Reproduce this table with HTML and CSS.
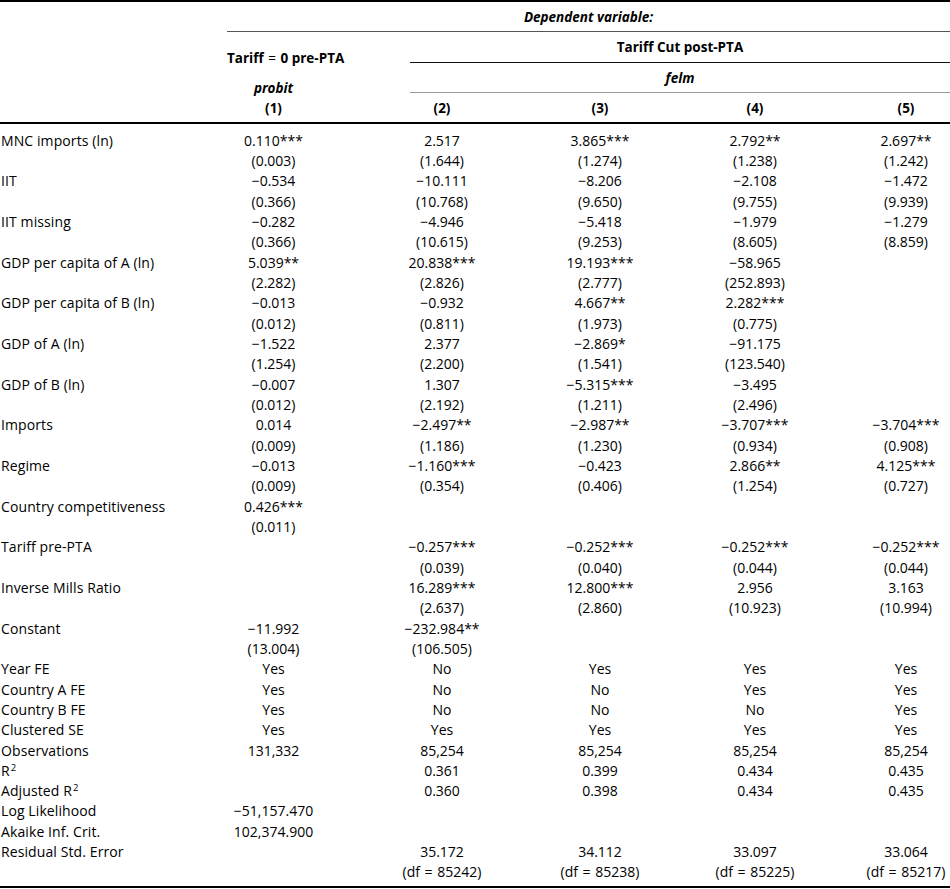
FILE: index.html
```html
<!DOCTYPE html>
<html lang="en">
<head>
<meta charset="utf-8">
<title>Regression table</title>
<link rel="stylesheet" href="styles.css">
</head>
<body>
<div class="table">
  <div class="rule rule-top"></div>

  <div class="head">
    <div class="h-dep">Dependent variable:</div>
    <div class="line line-dep"></div>
    <div class="h-t0">Tariff <span class="eq">=</span> 0 pre-PTA</div>
    <div class="h-cut">Tariff Cut post-PTA</div>
    <div class="line line-cut"></div>
    <div class="h-felm">felm</div>
    <div class="line line-felm"></div>
    <div class="h-probit"><span class="model">probit</span><span>(1)</span></div>
    <div class="h-num c2">(2)</div>
    <div class="h-num c3">(3)</div>
    <div class="h-num c4">(4)</div>
    <div class="h-num c5">(5)</div>
  </div>

  <div class="rule rule-mid"></div>

  <div class="body">
    <div class="lab">MNC imports (ln)</div><div class="v c1">0.110***</div><div class="v">2.517</div><div class="v">3.865***</div><div class="v">2.792**</div><div class="v">2.697**</div>
    <div class="lab"></div><div class="v c1">(0.003)</div><div class="v">(1.644)</div><div class="v">(1.274)</div><div class="v">(1.238)</div><div class="v">(1.242)</div>
    <div class="lab">IIT</div><div class="v c1">−0.534</div><div class="v">−10.111</div><div class="v">−8.206</div><div class="v">−2.108</div><div class="v">−1.472</div>
    <div class="lab"></div><div class="v c1">(0.366)</div><div class="v">(10.768)</div><div class="v">(9.650)</div><div class="v">(9.755)</div><div class="v">(9.939)</div>
    <div class="lab">IIT missing</div><div class="v c1">−0.282</div><div class="v">−4.946</div><div class="v">−5.418</div><div class="v">−1.979</div><div class="v">−1.279</div>
    <div class="lab"></div><div class="v c1">(0.366)</div><div class="v">(10.615)</div><div class="v">(9.253)</div><div class="v">(8.605)</div><div class="v">(8.859)</div>
    <div class="lab">GDP per capita of A (ln)</div><div class="v c1">5.039**</div><div class="v">20.838***</div><div class="v">19.193***</div><div class="v">−58.965</div><div class="v"></div>
    <div class="lab"></div><div class="v c1">(2.282)</div><div class="v">(2.826)</div><div class="v">(2.777)</div><div class="v">(252.893)</div><div class="v"></div>
    <div class="lab">GDP per capita of B (ln)</div><div class="v c1">−0.013</div><div class="v">−0.932</div><div class="v">4.667**</div><div class="v">2.282***</div><div class="v"></div>
    <div class="lab"></div><div class="v c1">(0.012)</div><div class="v">(0.811)</div><div class="v">(1.973)</div><div class="v">(0.775)</div><div class="v"></div>
    <div class="lab">GDP of A (ln)</div><div class="v c1">−1.522</div><div class="v">2.377</div><div class="v">−2.869*</div><div class="v">−91.175</div><div class="v"></div>
    <div class="lab"></div><div class="v c1">(1.254)</div><div class="v">(2.200)</div><div class="v">(1.541)</div><div class="v">(123.540)</div><div class="v"></div>
    <div class="lab">GDP of B (ln)</div><div class="v c1">−0.007</div><div class="v">1.307</div><div class="v">−5.315***</div><div class="v">−3.495</div><div class="v"></div>
    <div class="lab"></div><div class="v c1">(0.012)</div><div class="v">(2.192)</div><div class="v">(1.211)</div><div class="v">(2.496)</div><div class="v"></div>
    <div class="lab">Imports</div><div class="v c1">0.014</div><div class="v">−2.497**</div><div class="v">−2.987**</div><div class="v">−3.707***</div><div class="v">−3.704***</div>
    <div class="lab"></div><div class="v c1">(0.009)</div><div class="v">(1.186)</div><div class="v">(1.230)</div><div class="v">(0.934)</div><div class="v">(0.908)</div>
    <div class="lab">Regime</div><div class="v c1">−0.013</div><div class="v">−1.160***</div><div class="v">−0.423</div><div class="v">2.866**</div><div class="v">4.125***</div>
    <div class="lab"></div><div class="v c1">(0.009)</div><div class="v">(0.354)</div><div class="v">(0.406)</div><div class="v">(1.254)</div><div class="v">(0.727)</div>
    <div class="lab">Country competitiveness</div><div class="v c1">0.426***</div><div class="v"></div><div class="v"></div><div class="v"></div><div class="v"></div>
    <div class="lab"></div><div class="v c1">(0.011)</div><div class="v"></div><div class="v"></div><div class="v"></div><div class="v"></div>
    <div class="lab">Tariff pre-PTA</div><div class="v c1"></div><div class="v">−0.257***</div><div class="v">−0.252***</div><div class="v">−0.252***</div><div class="v">−0.252***</div>
    <div class="lab"></div><div class="v c1"></div><div class="v">(0.039)</div><div class="v">(0.040)</div><div class="v">(0.044)</div><div class="v">(0.044)</div>
    <div class="lab">Inverse Mills Ratio</div><div class="v c1"></div><div class="v">16.289***</div><div class="v">12.800***</div><div class="v">2.956</div><div class="v">3.163</div>
    <div class="lab"></div><div class="v c1"></div><div class="v">(2.637)</div><div class="v">(2.860)</div><div class="v">(10.923)</div><div class="v">(10.994)</div>
    <div class="lab">Constant</div><div class="v c1">−11.992</div><div class="v">−232.984**</div><div class="v"></div><div class="v"></div><div class="v"></div>
    <div class="lab"></div><div class="v c1">(13.004)</div><div class="v">(106.505)</div><div class="v"></div><div class="v"></div><div class="v"></div>
    <div class="lab">Year FE</div><div class="v c1">Yes</div><div class="v">No</div><div class="v">Yes</div><div class="v">Yes</div><div class="v">Yes</div>
    <div class="lab">Country A FE</div><div class="v c1">Yes</div><div class="v">No</div><div class="v">No</div><div class="v">Yes</div><div class="v">Yes</div>
    <div class="lab">Country B FE</div><div class="v c1">Yes</div><div class="v">No</div><div class="v">No</div><div class="v">No</div><div class="v">Yes</div>
    <div class="lab">Clustered SE</div><div class="v c1">Yes</div><div class="v">Yes</div><div class="v">Yes</div><div class="v">Yes</div><div class="v">Yes</div>
    <div class="lab">Observations</div><div class="v c1">131,332</div><div class="v">85,254</div><div class="v">85,254</div><div class="v">85,254</div><div class="v">85,254</div>
    <div class="lab"><span>R<sup>2</sup></span></div><div class="v c1"></div><div class="v">0.361</div><div class="v">0.399</div><div class="v">0.434</div><div class="v">0.435</div>
    <div class="lab"><span>Adjusted R<sup>2</sup></span></div><div class="v c1"></div><div class="v">0.360</div><div class="v">0.398</div><div class="v">0.434</div><div class="v">0.435</div>
    <div class="lab">Log Likelihood</div><div class="v c1">−51,157.470</div><div class="v"></div><div class="v"></div><div class="v"></div><div class="v"></div>
    <div class="lab">Akaike Inf. Crit.</div><div class="v c1">102,374.900</div><div class="v"></div><div class="v"></div><div class="v"></div><div class="v"></div>
    <div class="lab">Residual Std. Error</div><div class="v c1"></div><div class="v">35.172</div><div class="v">34.112</div><div class="v">33.097</div><div class="v">33.064</div>
    <div class="lab"></div><div class="v c1"></div><div class="v">(df <span class="eq">=</span> 85242)</div><div class="v">(df <span class="eq">=</span> 85238)</div><div class="v">(df <span class="eq">=</span> 85225)</div><div class="v">(df <span class="eq">=</span> 85217)</div>
  </div>

  <div class="rule rule-bottom"></div>
</div>
</body>
</html>
```
FILE: styles.css
```css
html, body {
  margin: 0;
  padding: 0;
  background: #ffffff;
}

body {
  font-family: "Open Sans", "Noto Sans", "Liberation Sans", sans-serif;
  font-size: 14px;
  color: #000000;
}

.table {
  width: 950px;
}

.rule {
  background: #000000;
  height: 2px;
}

.rule-mid {
  margin-bottom: 6px;
}

.rule-bottom {
  margin-top: 4px;
}

/* header grid */
.head {
  display: grid;
  grid-template-columns: 227px 105px 220px 96px 214px 88px;
  grid-template-rows: 29px 1px 30px 1px 29px 1px 29px;
  font-weight: 700;
  font-size: 13.5px;
  white-space: nowrap;
}

.head > div {
  display: flex;
  align-items: center;
}

.h-dep {
  grid-column: 2 / 7;
  grid-row: 1;
  justify-content: center;
  font-style: italic;
}

.line {
  height: 1px;
}

.line-dep {
  grid-column: 2 / 7;
  grid-row: 2;
  background: #555555;
}

.h-t0 {
  grid-column: 2;
  grid-row: 3 / 6;
  padding-bottom: 9px;
  white-space: pre;
}

.eq {
  font-weight: 400;
  margin: 0 1px;
}

.h-cut {
  grid-column: 3 / 7;
  grid-row: 3;
  margin-left: 78px;
  justify-content: center;
}

.line-cut {
  grid-column: 3 / 7;
  grid-row: 4;
  margin-left: 78px;
  background: #111111;
}

.h-felm {
  grid-column: 3 / 7;
  grid-row: 5;
  margin-left: 78px;
  justify-content: center;
  font-style: italic;
}

.line-felm {
  grid-column: 3 / 7;
  grid-row: 6;
  margin-left: 78px;
  background: #9a9a9a;
}

.h-probit {
  grid-column: 2;
  grid-row: 5 / 8;
  flex-direction: column;
  justify-content: flex-end;
  padding-right: 12px;
  padding-bottom: 4px;
  line-height: 20px;
}

.h-probit .model {
  font-style: italic;
}

.h-num {
  grid-row: 7;
  justify-content: center;
}

.c2 { grid-column: 3; }
.c3 { grid-column: 4; }
.c4 { grid-column: 5; }
.c5 { grid-column: 6; }

/* body grid */
.body {
  display: grid;
  grid-template-columns: 227px 105px 220px 96px 214px 88px;
  grid-auto-rows: 20.33px;
  white-space: nowrap;
}

.lab {
  display: flex;
  align-items: center;
  padding-left: 1px;
  letter-spacing: 0.1px;
}

.v {
  display: flex;
  align-items: center;
  justify-content: center;
  white-space: pre;
}

.v.c1 {
  padding-right: 12px;
}

sup {
  font-size: 9.5px;
  line-height: 0;
  position: relative;
  top: -5px;
  vertical-align: baseline;
  margin-left: 1px;
}
```
